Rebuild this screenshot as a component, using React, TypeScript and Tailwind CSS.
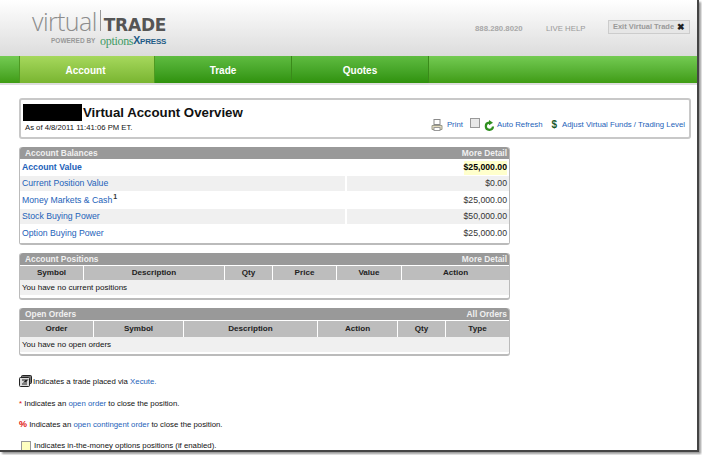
import React from "react";

const sans = "font-['Liberation_Sans',Arial,sans-serif]";

function PrinterIcon() {
  return (
    <svg width="12" height="12" viewBox="0 0 12 12">
      <rect x="3" y="0.5" width="6" height="5" fill="#fff" stroke="#8a8a8a" />
      <path d="M1 6.5h10v4H1z" fill="#e4dcc0" stroke="#9a9a8a" />
      <rect x="3" y="8.5" width="6" height="3" fill="#fff" stroke="#999" />
    </svg>
  );
}

function RefreshIcon() {
  return (
    <svg width="11" height="11" viewBox="0 0 11 11" fill="none">
      <path d="M9 6.5A3.6 3.6 0 1 1 5.2 2.6" stroke="#2f8f1f" strokeWidth="2.2" />
      <path d="M5 0l4 2.7L5 5.2z" fill="#2f8f1f" />
    </svg>
  );
}

function XecuteIcon() {
  return (
    <svg width="13" height="12" viewBox="0 0 13 12">
      <rect x="2.5" y="0.5" width="10" height="8" rx="1" fill="#777" stroke="#222" />
      <rect x="0.5" y="2.5" width="10" height="9" rx="1" fill="#ddd" stroke="#222" />
      <path d="M3 5h5L5.5 7H8M3 9h5" stroke="#222" strokeWidth="1.2" fill="none" />
    </svg>
  );
}

function ColHead({ cols, tall }: { cols: [string, string][]; tall?: boolean }) {
  return (
    <div className="flex gap-px bg-white h-full">
      {cols.map(([label, w]) => (
        <div key={label} className={`${w} h-full bg-[#bdbdbd] flex items-center justify-center font-bold text-[#222] text-[8.1px] ${tall ? "" : "pt-[1px]"}`}>
          {label}
        </div>
      ))}
    </div>
  );
}

function PanelHead({ left, right }: { left: string; right: string }) {
  return (
    <div className="h-[12px] shrink-0 bg-[#999] rounded-t-[3px] flex items-center justify-between pl-[5px] pr-[2px] text-[#f0f0f0] font-bold text-[8.4px]">
      <span>{left}</span>
      <span>{right}</span>
    </div>
  );
}

function BalanceRow({ label, value, h, shade, bold, sup, hl }: { label: string; value: string; h: string; shade?: boolean; bold?: boolean; sup?: boolean; hl?: boolean }) {
  return (
    <div className={`${h} flex items-center text-[8.7px] ${shade ? "bg-[#f0f0f0]" : "bg-white"} ${bold || sup ? "pt-[1px]" : ""}`}>
      <div className={`w-[325px] pl-[2px] text-[#1c62b9] ${bold ? "font-bold" : ""} ${sup ? "pt-[1px]" : ""}`}>
        {label}
        {sup && <sup className="text-[7px] font-bold text-[#333] -top-[4px] ml-px">1</sup>}
      </div>
      <div className={`flex-1 flex justify-end h-full items-center pr-[2px] ${shade ? "border-l-2 border-white" : ""}`}>
        <span className={`${hl ? "bg-[#ffffcc] font-bold text-black" : "text-[#333]"}`}>{value}</span>
      </div>
    </div>
  );
}

export default function App() {
  return (
    <div className={`${sans} w-[702px] h-[455px] bg-white overflow-hidden`}>
      <div className="w-[699px] h-[452px] bg-white overflow-hidden border-r-2 border-b-2 border-[#444] shadow-[2px_2px_2px_#999] flex flex-col">
        {/* Header */}
        <header className="h-[56px] shrink-0 bg-gradient-to-b from-white to-[#dcdcdc] flex justify-between">
          <div className="pl-[32px] pt-[6px] w-[180px]">
            <div className="flex items-baseline h-[29px]">
              <span className="font-['Open_Sans',sans-serif] font-light text-[#8c8c8c] text-[25px] leading-[30px] tracking-[-0.6px]">virtual</span>
              <span className="w-px h-[21px] bg-[#999] mx-[3px] self-center"></span>
              <span className="font-['DejaVu_Sans',sans-serif] font-bold text-[#555] text-[17px] leading-[30px] tracking-[-0.2px]">TRADE</span>
            </div>
            <div className="flex items-center pl-[19px] h-[12px]">
              <span className="text-[6.5px] font-bold text-[#999] w-[49px] whitespace-nowrap">POWERED BY</span>
              <span className="font-['Liberation_Serif',serif] text-[#3e9a63] text-[12px] tracking-[-0.3px]">options</span>
              <span className="text-[#1d5a86] font-bold text-[10.5px] tracking-[-0.2px]">X<span className="text-[8px]">PRESS</span></span>
            </div>
          </div>
          <div className="flex items-start pt-[20px] pr-[7px] text-[7.8px] font-bold text-[#aaa]">
            <span className="mt-[3px] w-[71px] text-[#a8a8a8]">888.280.8020</span>
            <span className="mt-[3px] w-[62px] font-normal text-[#999]">LIVE HELP</span>
            <button className="w-[82px] h-[14px] bg-[#e6e6e6] border border-[#ccc] flex items-center justify-center gap-[3px] text-[7.5px] text-[#999]">
              Exit Virtual Trade <span className="text-[#222] text-[9px] leading-none">✖</span>
            </button>
          </div>
        </header>

        {/* Nav */}
        <nav className="h-[27px] shrink-0 bg-gradient-to-b from-[#74cb52] to-[#3f9c12] flex pl-[19px] text-white font-bold text-[10px]">
          <div className="w-[136px] pt-[1px] flex items-center justify-center bg-gradient-to-b from-[#a6d85c] to-[#79b530] border-l border-[#4e9a22] border-r pr-[3px]">Account</div>
          <div className="w-[137px] pt-[1px] flex items-center justify-center bg-gradient-to-b from-[#5fbc40] to-[#2f920a] border-r border-[#3a8a1a]">Trade</div>
          <div className="w-[137px] pt-[1px] flex items-center justify-center bg-gradient-to-b from-[#5fbc40] to-[#2f920a] border-r border-[#3a8a1a]">Quotes</div>
        </nav>
        <div className="h-[2px] shrink-0 bg-[#ddd]"></div>

        <main className="pl-[19px] pt-[13px] flex flex-col flex-1 min-h-0">
          {/* Summary box */}
          <section className="w-[672px] h-[41px] shrink-0 border-2 border-[#c8c8c8] rounded-[3px] flex justify-between pl-[2px] pr-[4px] pt-[4px]">
            <div>
              <div className="flex items-center h-[17px]">
                <div className="w-[59px] h-[17px] bg-black"></div>
                <h1 className="text-[13.25px] font-bold text-[#111] ml-px leading-[17px]">Virtual Account Overview</h1>
              </div>
              <div className="text-[7.7px] text-[#111] pl-[2px] leading-[11px] mt-[1px]">As of 4/8/2011 11:41:06 PM ET.</div>
            </div>
            <div className="flex items-center gap-[4px] pt-[9px] text-[7.8px] text-[#1c62b9] whitespace-nowrap">
              <PrinterIcon />
              <span className="mr-[3px]">Print</span>
              <span className="w-[10px] h-[10px] border border-[#999] bg-[#e8e8e8] -mt-[4px]"></span>
              <RefreshIcon />
              <span className="-ml-[2px] mr-[5px]">Auto Refresh</span>
              <span className="text-[#1c5a2c] font-bold text-[10px] leading-none">$</span>
              <span className="ml-[1px]">Adjust Virtual Funds / Trading Level</span>
            </div>
          </section>

          {/* Balances */}
          <section className="w-[491px] h-[98px] shrink-0 mt-[8px] border-x border-b-2 border-[#bbb] rounded-[3px] flex flex-col">
            <PanelHead left="Account Balances" right="More Detail" />
            <BalanceRow label="Account Value" value="$25,000.00" h="h-[17px]" bold hl />
            <BalanceRow label="Current Position Value" value="$0.00" h="h-[15px]" shade />
            <BalanceRow label="Money Markets & Cash" value="$25,000.00" h="h-[18px]" sup />
            <BalanceRow label="Stock Buying Power" value="$50,000.00" h="h-[15px]" shade />
            <BalanceRow label="Option Buying Power" value="$25,000.00" h="h-[19px]" />
          </section>

          {/* Positions */}
          <section className="w-[491px] h-[47px] shrink-0 mt-[8px] border-x border-b-2 border-[#bbb] rounded-[3px] flex flex-col">
            <PanelHead left="Account Positions" right="More Detail" />
            <div className="h-[15px] shrink-0 border-t border-white">
              <ColHead cols={[["Symbol", "w-[63px]"], ["Description", "w-[140px]"], ["Qty", "w-[47px]"], ["Price", "w-[63px]"], ["Value", "w-[64px]"], ["Action", "w-[107px]"]]} />
            </div>
            <div className="h-[15px] shrink-0 bg-[#f0f0f0] pl-[2px] pt-[1px] flex items-center text-[8px] text-[#111]">You have no current positions</div>
          </section>

          {/* Orders */}
          <section className="w-[491px] h-[48px] shrink-0 mt-[8px] border-x border-b-2 border-[#bbb] rounded-[3px] flex flex-col">
            <PanelHead left="Open Orders" right="All Orders" />
            <div className="h-[17px] shrink-0 border-t border-white">
              <ColHead tall cols={[["Order", "w-[73px]"], ["Symbol", "w-[89px]"], ["Description", "w-[133px]"], ["Action", "w-[79px]"], ["Qty", "w-[47px]"], ["Type", "w-[63px]"]]} />
            </div>
            <div className="h-[15px] shrink-0 bg-[#f0f0f0] pl-[2px] flex items-center text-[8px] text-[#111]">You have no open orders</div>
          </section>

          {/* Legend */}
          <div className="mt-[18px] flex flex-col text-[7.8px] text-[#111] leading-[11px]">
            <div className="flex items-end h-[13px]">
              <XecuteIcon />
              <span className="ml-px">Indicates a trade placed via <span className="text-[#1c62b9]">Xecute.</span></span>
            </div>
            <div className="mt-[11px] h-[11px]"><span className="text-[#e01010]">*</span> Indicates an <span className="text-[#1c62b9]">open order</span> to close the position.</div>
            <div className="mt-[10px] h-[11px]"><span className="text-[#e01010] font-bold text-[9px]">%</span> Indicates an <span className="text-[#1c62b9]">open contingent order</span> to close the position.</div>
            <div className="mt-[10px] flex items-center h-[11px] pl-[2px]">
              <span className="w-[10px] h-[10px] bg-[#ffffc0] border border-[#999] mr-[3px]"></span>
              Indicates in-the-money options positions (if enabled).
            </div>
          </div>
        </main>
      </div>
    </div>
  );
}
